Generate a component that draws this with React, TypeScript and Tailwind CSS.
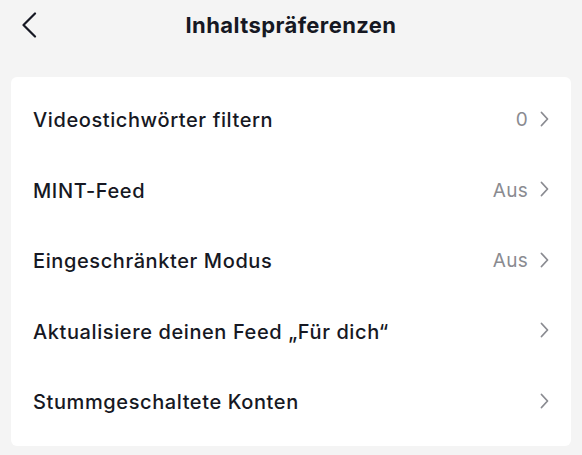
import React from "react";

const Chevron = () => (
  <svg width="12" height="16" viewBox="0 0 12 16" fill="none" className="shrink-0 -mt-[3px]">
    <path d="M3.5 1.5 L9.5 8 L3.5 14.5" stroke="#8a8b91" strokeWidth="1.8" strokeLinecap="round" strokeLinejoin="round" />
  </svg>
);

const rows: { label: string; value?: string }[] = [
  { label: "Videostichwörter filtern", value: "0" },
  { label: "MINT-Feed", value: "Aus" },
  { label: "Eingeschränkter Modus", value: "Aus" },
  { label: "Aktualisiere deinen Feed „Für dich“" },
  { label: "Stummgeschaltete Konten" },
];

export default function App() {
  return (
    <div
      className="w-[582px] h-[455px] bg-[#f4f4f4] overflow-hidden"
      style={{ fontFamily: 'Inter, "Liberation Sans", Arial, sans-serif' }}
    >
      <div className="relative h-[50px] flex items-center justify-center">
        <svg width="18" height="26" viewBox="0 0 18 26" fill="none" className="absolute left-[20px] top-[12px]">
          <path d="M15 1.5 L3.5 13 L15 24.5" stroke="#161823" strokeWidth="2.2" strokeLinecap="round" strokeLinejoin="round" />
        </svg>
        <div className="text-[22px] font-bold text-[#161823] tracking-[0.4px]">Inhaltspräferenzen</div>
      </div>
      <div className="mx-[11px] mt-[27px] bg-white rounded-[6px] py-[8px]">
        {rows.map((r) => (
          <div key={r.label} className="h-[70.5px] flex items-center pl-[22px] pr-[21px]">
            <div className="flex-1 text-[20px] text-[#161823] font-medium tracking-[0.6px]">{r.label}</div>
            {r.value && <div className="text-[19px] text-[#8a8b91] mr-[10px] tracking-[0.3px]">{r.value}</div>}
            <Chevron />
          </div>
        ))}
      </div>
    </div>
  );
}
